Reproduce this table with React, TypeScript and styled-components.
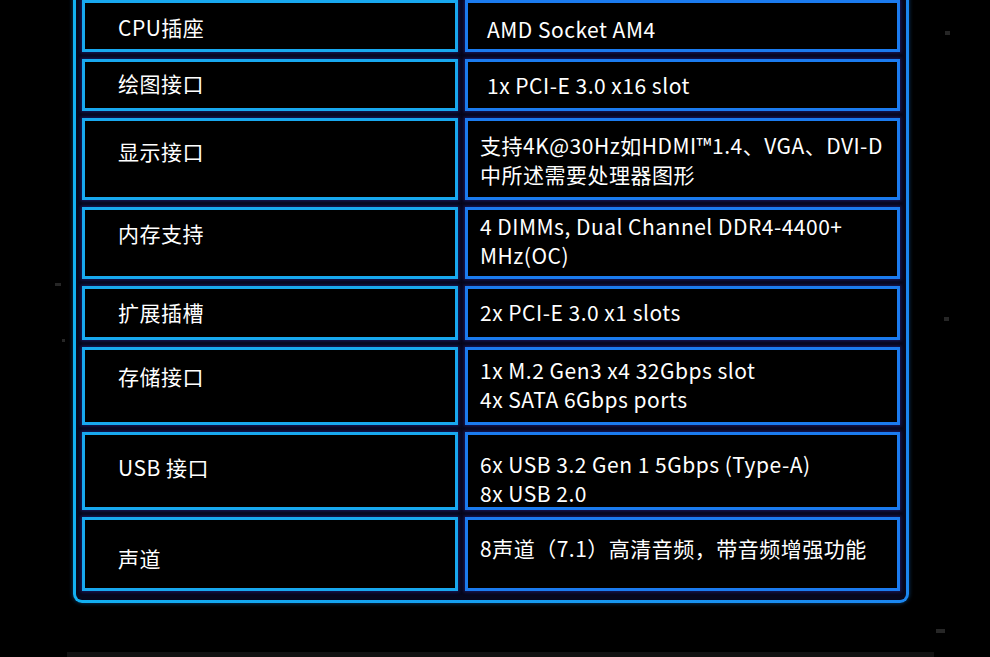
import React from 'react';
import styled, {createGlobalStyle} from "styled-components";

const GlobalStyle = createGlobalStyle`
  html, body {
    margin: 0;
    padding: 0;
    background: #000;
    overflow: hidden;
  }
  body {
    font-family: "Noto Sans CJK SC", "Noto Sans", sans-serif;
  }
`;

const Page = styled.div`
  position: relative;
  width: 990px;
  height: 657px;
  background: #000;
  overflow: hidden;
`;

const FrameOuter = styled.div`
  margin: -12px 0 0 73px;
  width: 836px;
  padding: 3px;
  box-sizing: border-box;
  border-radius: 0 0 9px 9px;
  background: linear-gradient(90deg, #12b0f2 0%, #169ef1 50%, #1b86f0 100%);
  box-shadow: 0 0 4px rgba(20, 140, 255, 0.45);
`;

const FrameInner = styled.div`
  background: #07071c;
  border-radius: 0 0 6px 6px;
  padding: 9px 6px 9px;
  display: grid;
  grid-template-columns: 376px 435px;
  column-gap: 7px;
  row-gap: 7px;
`;

const Cell = styled.div<{ $side: 'label' | 'value'; $h: number; $top: number; $left: number }>`
  box-sizing: border-box;
  height: ${p => p.$h}px;
  border: 3px solid ${p => p.$side === 'label' ? '#18a8ef' : '#1b7bef'};
  background: #000;
  box-shadow: 0 0 3px 1px rgba(40, 40, 150, 0.55);
  padding: ${p => p.$top}px 0 0 ${p => p.$left}px;
  color: #fff;
  font-size: 21px;
  line-height: 29px;
  letter-spacing: 0.5px;
  white-space: nowrap;
`;

const Line = styled.div``;

const Speck = styled.div<{ $x: number; $y: number; $w: number; $h: number }>`
  position: absolute;
  left: ${p => p.$x}px;
  top: ${p => p.$y}px;
  width: ${p => p.$w}px;
  height: ${p => p.$h}px;
  background: #262626;
`;

const BottomBar = styled.div`
  margin: 49px 0 0 67px;
  width: 867px;
  height: 10px;
  background: #121212;
`;

interface SpecRow {
  label: string;
  value: string[];
  h: number;
  labelTop: number;
  valueTop: number;
  valueLeft: number;
}

const rows: SpecRow[] = [
  {label: "CPU插座", value: ["AMD Socket AM4"], h: 52, labelTop: 10, valueTop: 12, valueLeft: 19},
  {label: "绘图接口", value: ["1x PCI-E 3.0 x16 slot"], h: 52, labelTop: 7, valueTop: 9, valueLeft: 19},
  {label: "显示接口", value: ["支持4K@30Hz如HDMI™1.4、VGA、DVI-D", "中所述需要处理器图形"], h: 82, labelTop: 16, valueTop: 10, valueLeft: 12},
  {label: "内存支持", value: ["4 DIMMs, Dual Channel DDR4-4400+", "MHz(OC)"], h: 72, labelTop: 9, valueTop: 2, valueLeft: 12},
  {label: "扩展插槽", value: ["2x PCI-E 3.0 x1 slots"], h: 54, labelTop: 9, valueTop: 9, valueLeft: 12},
  {label: "存储接口", value: ["1x M.2 Gen3 x4 32Gbps slot", "4x SATA 6Gbps ports"], h: 78, labelTop: 12, valueTop: 6, valueLeft: 12},
  {label: "USB 接口", value: ["6x USB 3.2 Gen 1 5Gbps (Type-A)", "8x USB 2.0"], h: 78, labelTop: 18, valueTop: 15, valueLeft: 12},
  {label: "声道", value: ["8声道（7.1）高清音频，带音频增强功能"], h: 74, labelTop: 24, valueTop: 14, valueLeft: 12},
];

const App: React.FC = () => {
  return (
      <Page>
        <GlobalStyle/>
        <FrameOuter>
          <FrameInner>
            {rows.map(row => (
                <React.Fragment key={row.label}>
                  <Cell $side="label" $h={row.h} $top={row.labelTop} $left={33}>{row.label}</Cell>
                  <Cell $side="value" $h={row.h} $top={row.valueTop} $left={row.valueLeft}>
                    {row.value.map(line => <Line key={line}>{line}</Line>)}
                  </Cell>
                </React.Fragment>
            ))}
          </FrameInner>
        </FrameOuter>
        <BottomBar/>
        {/* faint specks scattered over the dark background */}
        <Speck $x={945} $y={31} $w={5} $h={4}/>
        <Speck $x={944} $y={317} $w={5} $h={4}/>
        <Speck $x={55} $y={283} $w={6} $h={3}/>
        <Speck $x={62} $y={339} $w={3} $h={3}/>
        <Speck $x={936} $y={629} $w={9} $h={4}/>
      </Page>
  );
};

export default App;
